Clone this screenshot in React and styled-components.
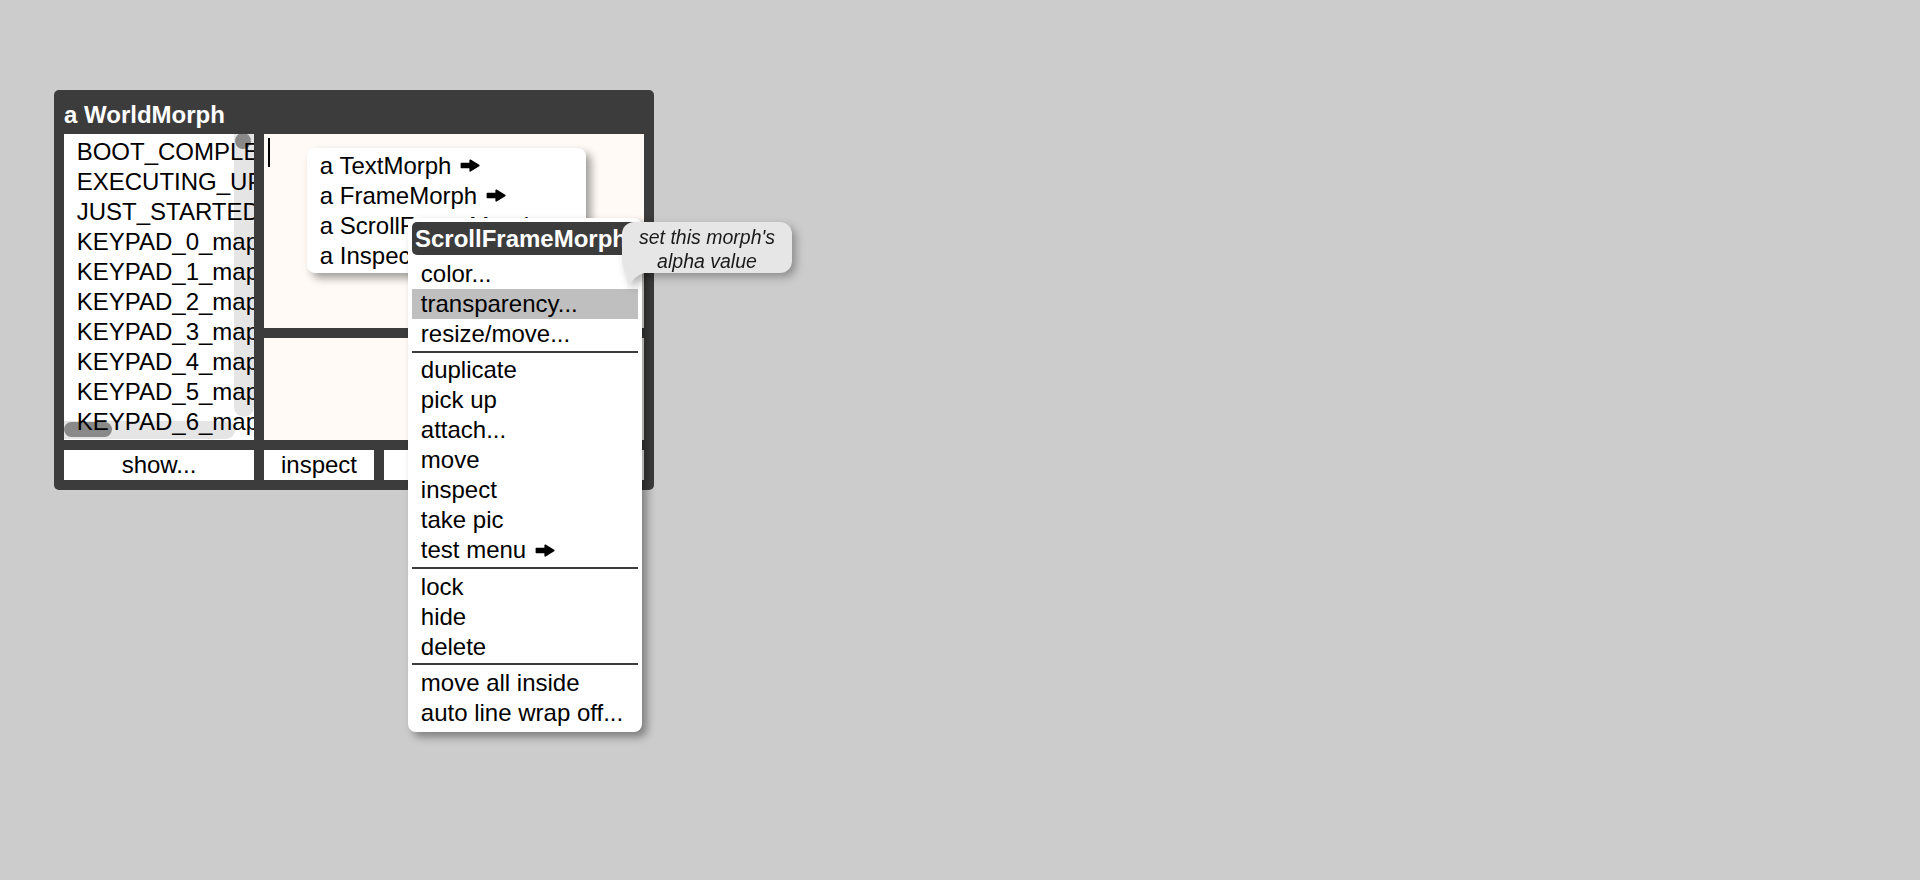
import React from "react";
import styled, {createGlobalStyle} from "styled-components";

const GlobalStyle = createGlobalStyle`
    html, body {
        margin: 0;
        padding: 0;
    }
    body {
        font-family: "Liberation Sans", Arial, sans-serif;
        background: #cccccc;
    }
`;

const Desktop = styled.div`
    position: relative;
    width: 1920px;
    height: 880px;
    overflow: hidden;
    background: #cccccc;
`;

const Window = styled.div`
    position: absolute;
    left: 54px;
    top: 90px;
    width: 600px;
    height: 400px;
    box-sizing: border-box;
    padding: 10px;
    background: #3c3c3c;
    border-radius: 5px;
    display: flex;
    flex-direction: column;
`;

const WindowTitle = styled.div`
    height: 34px;
    line-height: 29.4px;
    font-size: 24px;
    font-weight: bold;
    color: #ffffff;
    white-space: nowrap;
`;

const WindowBody = styled.div`
    display: grid;
    grid-template-columns: 190px 380px;
    column-gap: 10px;
    height: 306px;
`;

const ListPane = styled.div`
    position: relative;
    overflow: hidden;
    background: #ffffff;
    box-sizing: border-box;
    padding: 2.5px 0 0 12.7px;
`;

const ListItem = styled.div`
    height: 30px;
    line-height: 30px;
    font-size: 24px;
    color: #000;
    white-space: nowrap;
`;

const VTrack = styled.div`
    position: absolute;
    right: 0;
    top: 0;
    width: 20px;
    height: 282.7px;
    border-radius: 0 0 10px 10px;
    background: rgba(0, 0, 0, 0.1);
`;

const HTrack = styled.div`
    position: absolute;
    left: 0;
    bottom: 0.7px;
    width: 171px;
    height: 18.6px;
    border-radius: 0 9px 9px 0;
    background: rgba(0, 0, 0, 0.1);
`;

const Thumb = styled.div`
    position: absolute;
    left: ${p => p.$left}px;
    top: ${p => p.$top}px;
    width: ${p => p.$w}px;
    height: ${p => p.$h}px;
    border-radius: 8px;
    background: rgba(0, 0, 0, 0.4);
`;

const RightColumn = styled.div`
    display: grid;
    grid-template-rows: 194px 102px;
    row-gap: 10px;
`;

const TextPane = styled.div`
    background: rgb(255, 250, 245);
    overflow: hidden;
`;

const Cursor = styled.div`
    width: 2px;
    height: 29px;
    margin: 4px 0 0 4px;
    background: #000;
`;

const ButtonRow = styled.div`
    display: grid;
    grid-template-columns: 190px 110px 260px;
    column-gap: 10px;
    height: 30px;
    margin-top: 10px;
`;

const Button = styled.div`
    background: #ffffff;
    text-align: center;
    line-height: 30px;
    font-size: 24px;
    color: #000;
    white-space: nowrap;
    overflow: hidden;
`;

const Menu = styled.div`
    position: absolute;
    left: ${p => p.$left}px;
    top: ${p => p.$top}px;
    width: ${p => p.$width}px;
    box-sizing: border-box;
    padding: ${p => p.$padTop}px 4px ${p => p.$padBottom}px;
    background: #ffffff;
    border-radius: 8px;
    box-shadow: 5px 5px 9px rgba(0, 0, 0, 0.38);
`;

const MenuTitle = styled.div`
    height: 33.3px;
    line-height: 33.3px;
    padding-left: 2.7px;
    margin-bottom: 3.8px;
    background: #3c3c3c;
    border-radius: 5px;
    color: #ffffff;
    font-size: 24px;
    font-weight: bold;
    white-space: nowrap;
    overflow: hidden;
`;

const MenuItem = styled.div`
    height: 30px;
    line-height: 30px;
    padding: 0 8.5px;
    font-size: 24px;
    color: #000;
    white-space: nowrap;
    overflow: hidden;
    background: ${p => (p.$active ? "#bfbfbf" : "transparent")};
`;

const Separator = styled.div`
    height: 2px;
    margin: 1.8px 0 2.6px;
    background: #3c3c3c;
`;

const ArrowIcon = styled.svg`
    width: 20px;
    height: 13px;
    margin-left: 9px;
    vertical-align: 1.5px;
`;

const Arrow = () => (
    <ArrowIcon viewBox="0 0 20 13">
        <path d="M1.4 4.6 H10.2 V1.2 L18.8 6.5 L10.2 11.8 V8.4 H1.4 Z"
              fill="#000" stroke="#000" strokeWidth="1.6" strokeLinejoin="round"/>
    </ArrowIcon>
);

const Tooltip = styled.div`
    position: absolute;
    left: 622.3px;
    top: 222.3px;
    width: 169.4px;
    height: 51px;
    box-sizing: border-box;
    padding-top: 2.3px;
    background: #e6e6e6;
    border-radius: 12px;
    font-size: 19.5px;
    font-style: italic;
    line-height: 24px;
    text-align: center;
    color: #1a1a1a;
    filter: drop-shadow(4px 4px 4px rgba(0, 0, 0, 0.3));
`;

const TooltipTail = styled.svg`
    position: absolute;
    left: 0;
    top: 40px;
    width: 24px;
    height: 26px;
    overflow: visible;
`;

const listItems = [
    "BOOT_COMPLETE",
    "EXECUTING_UPDATES",
    "JUST_STARTED",
    "KEYPAD_0_mappedToThaiKeyboard",
    "KEYPAD_1_mappedToThaiKeyboard",
    "KEYPAD_2_mappedToThaiKeyboard",
    "KEYPAD_3_mappedToThaiKeyboard",
    "KEYPAD_4_mappedToThaiKeyboard",
    "KEYPAD_5_mappedToThaiKeyboard",
    "KEYPAD_6_mappedToThaiKeyboard",
];

const morphItems = [
    {label: "a TextMorph", sub: true},
    {label: "a FrameMorph", sub: true},
    {label: "a ScrollFrameMorph", sub: true},
    {label: "a InspectorMorph", sub: false},
];

// groups split by separators
const contextGroups = [
    ["color...", "transparency...", "resize/move..."],
    ["duplicate", "pick up", "attach...", "move", "inspect", "take pic", "test menu"],
    ["lock", "hide", "delete"],
    ["move all inside", "auto line wrap off..."],
];

const App = () => {
    return (
        <>
            <GlobalStyle/>
            <Desktop>
                <Window>
                    <WindowTitle>a WorldMorph</WindowTitle>
                    <WindowBody>
                        <ListPane>
                            {listItems.map(item => <ListItem key={item}>{item}</ListItem>)}
                            <VTrack>
                                <Thumb $left={1} $top={-1} $w={16} $h={16}/>
                            </VTrack>
                            <HTrack>
                                <Thumb $left={0.3} $top={1} $w={47.4} $h={15.6}/>
                            </HTrack>
                        </ListPane>
                        <RightColumn>
                            <TextPane>
                                <Cursor/>
                            </TextPane>
                            <TextPane/>
                        </RightColumn>
                    </WindowBody>
                    <ButtonRow>
                        <Button>show...</Button>
                        <Button>inspect</Button>
                        <Button>close</Button>
                    </ButtonRow>
                </Window>

                <Menu $left={307.3} $top={148.3} $width={278.5} $padTop={2.7} $padBottom={2}>
                    {morphItems.map(m => (
                        <MenuItem key={m.label}>
                            {m.label}{m.sub && <Arrow/>}
                        </MenuItem>
                    ))}
                </Menu>

                <Menu $left={408.3} $top={218.3} $width={233.7} $padTop={3.4} $padBottom={4.5}>
                    <MenuTitle>ScrollFrameMorph</MenuTitle>
                    {contextGroups.map((group, gi) => (
                        <React.Fragment key={gi}>
                            {gi > 0 && <Separator/>}
                            {group.map(label => (
                                <MenuItem key={label} $active={label === "transparency..."}>
                                    {label}{label === "test menu" && <Arrow/>}
                                </MenuItem>
                            ))}
                        </React.Fragment>
                    ))}
                </Menu>

                <Tooltip>
                    <TooltipTail viewBox="0 0 24 26">
                        <path d="M1 0 L1 4 Q5 14 6.7 24.3 Q12 14 22 11 L22 0 Z" fill="#e6e6e6"/>
                    </TooltipTail>
                    set this morph's<br/>alpha value
                </Tooltip>
            </Desktop>
        </>
    );
};

export default App;
